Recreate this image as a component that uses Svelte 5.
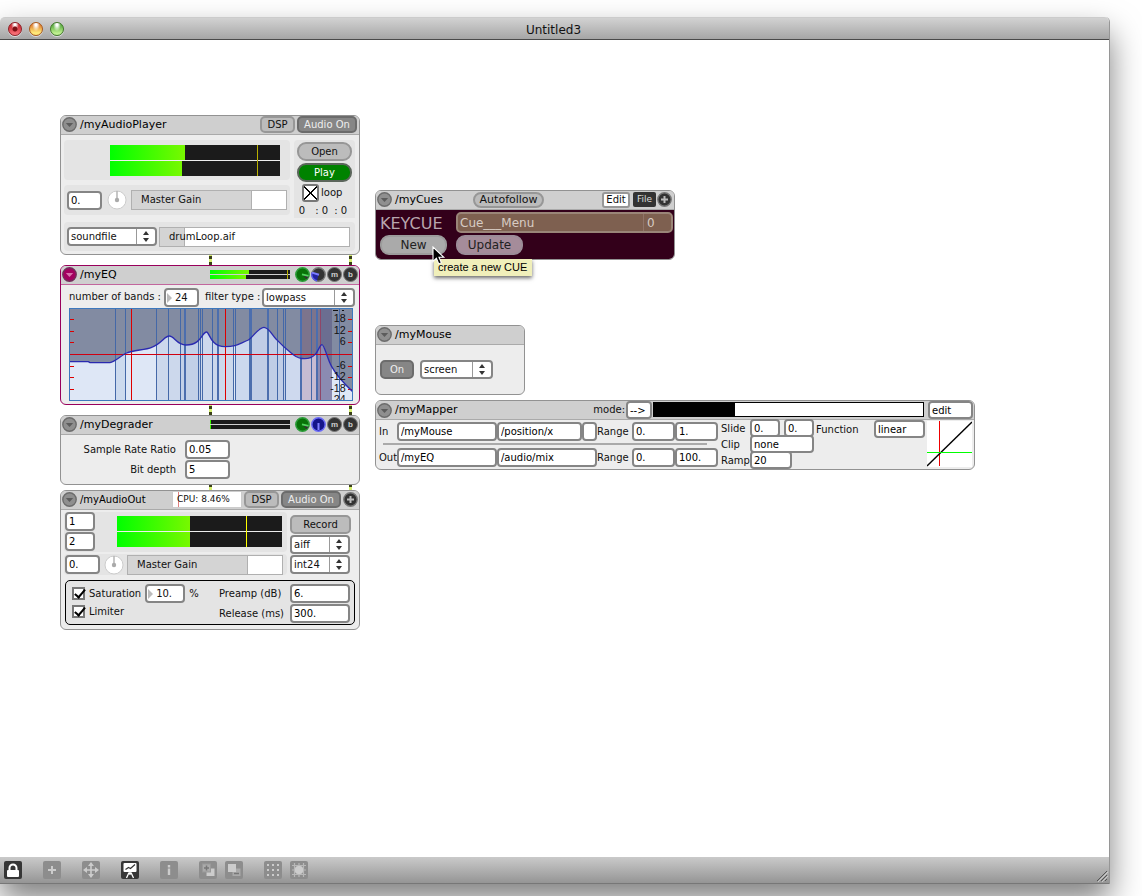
<script>
  const thinLines = [180, 210, 303, 339, 375, 429, 435, 441, 471, 534, 540, 666, 684, 690, 768, 852];
  const thickLines = [387, 390, 486, 489, 582, 585, 588, 636, 639, 735, 738, 783, 786];
  const redLines = [228, 510];
  const ticks = [193, 229, 262, 334, 367, 402];
  const scale = [
    ['18', 200], ['12', 237], ['6', 270], ['-6', 342],
    ['-12', 376], ['-18', 411], ['24', 445]
  ];
  const curve =
    'M42,320 L100,320 L105,323 L165,323 C180,320 200,300 215,294 C235,284 270,286 290,277 C320,266 328,243 343,243 C358,243 365,270 393,270 C440,270 440,231 455,231 C463,231 466,275 510,275 C545,275 550,267 580,255 C595,246 610,217 627,217 C642,217 650,240 665,254 C685,276 700,287 715,299 C735,315 765,315 780,299 C792,286 794,269 801,269 C808,269 818,315 830,335 C845,362 865,384 894,411';

  const tools = ['lock', 'new', 'move', 'present', 'info', 'front', 'back', 'grid', 'snap'];
  const toolNames = {
    lock: 'Lock patcher', new: 'New object', move: 'Move', present: 'Presentation mode', info: 'Inspector',
    front: 'Bring to front', back: 'Send to back', grid: 'Grid', snap: 'Snap to grid'
  };
</script>

{#snippet toggle(name)}
  <button class="disc" aria-label="{name} menu">
    <svg width="15" height="15" viewBox="0 0 15 15">
      <circle cx="7.5" cy="7.5" r="6.7" />
      <path d="M3.8 6h7.4L7.5 10z" />
    </svg>
  </button>
{/snippet}

{#snippet plus()}
  <button class="round" aria-label="More">
    <svg width="15" height="15" viewBox="0 0 15 15">
      <circle cx="7.5" cy="7.5" r="6.7" fill="#333" stroke="#777" stroke-width="1.4" />
      <path d="M7.5 4v7M4 7.5h7" stroke="#bbb" stroke-width="2" />
    </svg>
  </button>
{/snippet}

{#snippet meter(a, b, peak, cls)}
  <div class="meter {cls}">
    {#each [a, b] as level}
      <div class="bar"><i style:width="{level}%"></i></div>
    {/each}
    {#if peak}<span class="peak" style:left="{peak}%"></span>{/if}
  </div>
{/snippet}

{#snippet pick(value, name, cls)}
  <span class="pick {cls}">
    <select aria-label={name}><option>{value}</option></select>
    <svg width="19" height="15" viewBox="0 0 19 15">
      <path d="M.5 0v15" stroke="#999" />
      <path d="M10 2l3 4H7zM10 13l3-4H7z" fill="#333" />
    </svg>
  </span>
{/snippet}

{#snippet dial()}
  <svg class="dial" width="20" height="20" viewBox="0 0 20 20">
    <circle cx="10" cy="10" r="9" fill="#fff" stroke="#ccc" />
    <path d="M10 1v9" stroke="#b0b0b0" stroke-width="1.4" />
    <circle cx="10" cy="10" r="2.2" fill="#aaa" />
  </svg>
{/snippet}

{#snippet knobs(blue)}
  <div class="knobs">
    <svg width="15" height="15" viewBox="0 0 15 15">
      <circle cx="7.5" cy="7.5" r="6.7" fill="#087208" stroke="#2d9d3a" stroke-width="1.5" />
      <path d="M7.5 7.5l6.4 1.8-2.4 3.200z" fill="#333" />
      <path d="M7 7.3l6.400 1.5" stroke="#4fd65c" stroke-width="1.8" />
    </svg>
    <svg width="15" height="15" viewBox="0 0 15 15">
      {#if blue}
        <circle cx="7.5" cy="7.5" r="6.7" fill="#15158a" stroke="#6a6af8" stroke-width="1.5" />
        <path d="M7.5 6v7" stroke="#8080ff" stroke-width="2" />
      {:else}
        <circle cx="7.5" cy="7.5" r="6.7" fill="#333" stroke="#777" stroke-width="1.4" />
        <path d="M7.5 7.5L1 5.6A6.7 6.7 0 0 0 6 14z" fill="#2222a0" />
        <path d="M1 5.600A6.700 6.700 0 0 0 6 14" fill="none" stroke="#5a5af0" stroke-width="1.400" />
        <path d="M8 7.8L1 5.6" stroke="#7b7bff" stroke-width="2" />
      {/if}
    </svg>
    {#each ['m', 'b'] as letter}
      <button class="letter" aria-label={letter === 'm' ? 'Mute' : 'Bypass'}>{letter}</button>
    {/each}
  </div>
{/snippet}

<div class="desktop">
  <main class="window">
    <header class="titlebar">
      <div class="lights">
        <button class="light red" aria-label="Close"></button>
        <button class="light amber" aria-label="Minimise"></button>
        <button class="light green" aria-label="Zoom"></button>
      </div>
      <h1>Untitled3</h1>
    </header>

    <div class="canvas">
      <span class="cord left"></span>
      <span class="cord right"></span>

      <section class="module player">
        <div class="head">
          {@render toggle('myAudioPlayer')}
          <h2>/myAudioPlayer</h2>
          <div class="end">
            <button class="btn dsp">DSP</button>
            <button class="btn dark audio">Audio On</button>
          </div>
        </div>
        <div class="body">
          <div class="split">
            <div class="stack">
              <div class="panel meterpanel">{@render meter(44, 42.5, 86.5, 'big olive')}</div>
              <div class="panel gain">
                <input class="num w35" aria-label="Gain" value="0." />
                {@render dial()}
                <div class="slider"><i style:width="78%"></i><span>Master Gain</span></div>
              </div>
            </div>
            <div class="panel transport">
              <button class="btn pill">Open</button>
              <button class="btn pill play">Play</button>
              <label class="loop">
                <input type="checkbox" class="cross" checked />loop
              </label>
              <span class="time"><span>0</span><span>:</span><span>0</span><span>:</span><span>0</span></span>
            </div>
          </div>
          <div class="panel source">
            {@render pick('soundfile', 'Source', 'w90')}
            <div class="slider"><i style:width="13%"></i><span>drumLoop.aif</span></div>
          </div>
        </div>
      </section>

      <section class="module eq">
        <div class="head">
          {@render toggle('myEQ')}
          <h2>/myEQ</h2>
          <div class="end">
            {@render meter(49, 45, 96, 'small olive')}
            {@render knobs(false)}
          </div>
        </div>
        <div class="body">
          <div class="row">
            <label for="bands">number of bands :</label>
            <span class="spin w35"><input id="bands" value="24" /></span>
            <span class="filter">filter type :</span>
            {@render pick('lowpass', 'filter type', 'grow')}
          </div>
          <svg class="graph" viewBox="42 159 852 279" role="img" aria-label="Filter response">
            <clipPath id="under"><path d="{curve} V438 H42Z" /></clipPath>
            <rect x="42" y="159" width="852" height="279" fill="#828ba2" />
            <rect x="741" y="159" width="54" height="279" fill="#7d748c" />
            <rect x="795" y="159" width="36" height="279" fill="#6b6e91" />
            <g clip-path="url(#under)">
              <rect x="42" y="159" width="852" height="279" fill="#dee7f6" />
              <rect x="181" y="159" width="30" height="279" fill="#ccdaee" />
              <rect x="304" y="159" width="230" height="279" fill="#ccd8ec" />
              <rect x="375" y="159" width="60" height="279" fill="#c2d0e8" />
              <rect x="540" y="159" width="45" height="279" fill="#ccd8ee" />
              <rect x="588" y="159" width="150" height="279" fill="#c0cde6" />
              <rect x="690" y="159" width="48" height="279" fill="#ced9ee" />
              <rect x="741" y="159" width="44" height="279" fill="#c6bcd2" />
              <rect x="785" y="159" width="46" height="279" fill="#8b8bb2" />
            </g>
            <g shape-rendering="crispEdges">
              {#each thinLines as x}<rect {x} y="159" width="3" height="279" fill="#4468a8" />{/each}
              {#each thickLines as x}<rect {x} y="159" width="3" height="279" fill="#4c6eae" />{/each}
              {#each redLines as x}<rect {x} y="159" width="3" height="279" fill="#d00" />{/each}
              <rect x="795" y="159" width="3" height="279" fill="#8f4668" />
              <rect x="42" y="297" width="852" height="3" fill="#d00010" />
              {#each ticks as y}
                <rect x="45" y={y - 1} width="12" height="3" fill="#d00" />
                <rect x="879" y={y - 1} width="12" height="3" fill="#d00" />
              {/each}
              <path d="M835 165h15M862 165h6" stroke="#111" stroke-width="3" />
            </g>
            <path d={curve} fill="none" stroke="#2a2ab0" stroke-width="4" />
            {#each scale as [t, y]}<text x="872" {y}>{t}</text>{/each}
            <rect x="43.5" y="160.5" width="849" height="276" fill="none" stroke="#3d78bd" stroke-width="3" />
          </svg>
        </div>
      </section>

      <section class="module degrader">
        <div class="head">
          {@render toggle('myDegrader')}
          <h2>/myDegrader</h2>
          <div class="end">
            {@render meter(1, 1, 0, 'small')}
            {@render knobs(true)}
          </div>
        </div>
        <div class="body">
          <label for="ratio">Sample Rate Ratio</label><input id="ratio" class="num" value="0.05" />
          <label for="depth">Bit depth</label><input id="depth" class="num" value="5" />
        </div>
      </section>

      <section class="module out">
        <div class="head">
          {@render toggle('myAudioOut')}
          <h2>/myAudioOut</h2>
          <div class="end">
            <div class="cpu">CPU: 8.46%</div>
            <button class="btn dsp">DSP</button>
            <button class="btn dark audio">Audio On</button>
            {@render plus()}
          </div>
        </div>
        <div class="body">
          <div class="split">
            <div class="stack">
              <div class="panel outmeter">
                <div class="chans">
                  <input class="num" aria-label="Left channel" value="1" />
                  <input class="num" aria-label="Right channel" value="2" />
                </div>
                {@render meter(44.5, 44.5, 78, 'big')}
              </div>
              <div class="panel gain">
                <input class="num w35" aria-label="Output gain" value="0." />
                {@render dial()}
                <div class="slider"><i style:width="78%"></i><span>Master Gain</span></div>
              </div>
            </div>
            <div class="rec">
              <button class="btn">Record</button>
              {@render pick('aiff', 'File format', 'w60')}
              {@render pick('int24', 'Sample format', 'w60')}
            </div>
          </div>
          <div class="limits">
            <div class="checks">
              <div class="line">
                <label><input type="checkbox" class="tick" checked />Saturation</label>
                <span class="spin w40"><input aria-label="Saturation amount" value="10." /></span>
                <span>%</span>
              </div>
              <label><input type="checkbox" class="tick" checked />Limiter</label>
            </div>
            <div class="params">
              <label for="preamp">Preamp (dB)</label><input id="preamp" class="num" value="6." />
              <label for="release">Release (ms)</label><input id="release" class="num" value="300." />
            </div>
          </div>
        </div>
      </section>

      <section class="module cues">
        <div class="head">
          {@render toggle('myCues')}
          <h2>/myCues</h2>
          <button class="btn auto">Autofollow</button>
          <div class="end">
            <button class="btn edit">Edit</button>
            <button class="btn file">File</button>
            {@render plus()}
          </div>
        </div>
        <div class="body">
          <span class="key">KEYCUE</span>
          <div class="cuemenu"><span>Cue___Menu</span><b>0</b></div>
          <button class="btn new">New</button>
          <button class="btn update">Update</button>
        </div>
      </section>
      <div class="tooltip" role="tooltip">create a new CUE</div>
      <svg class="cursor" width="14" height="20" viewBox="0 0 14 20">
        <path d="M1 1v14.5l3.4-3.2 2.4 5.6 2.6-1.1L7 11.3h4.8z" fill="#000" stroke="#fff" stroke-width="1.1" />
      </svg>

      <section class="module mouse">
        <div class="head">
          {@render toggle('myMouse')}
          <h2>/myMouse</h2>
        </div>
        <div class="body">
          <button class="btn dark">On</button>
          {@render pick('screen', 'Mouse mode', 'w73')}
        </div>
      </section>

      <section class="module mapper">
        <div class="head">
          {@render toggle('myMapper')}
          <h2>/myMapper</h2>
          <div class="end">
            <label for="mode">mode:</label>
            <input id="mode" class="num mode" value="-->" />
            <div class="progress"><i style:width="30%"></i></div>
            <input class="num fnedit" aria-label="Edit function" value="edit" />
          </div>
        </div>
        <div class="body">
          <div class="routes">
            <div class="route">
              <label for="in">In</label>
              <input id="in" class="num w100" value="/myMouse" />
              <input class="num w85" aria-label="Input parameter" value="/position/x" />
              <input class="num w15" aria-label="Input index" value="" />
              <span>Range</span>
              <input class="num w43" aria-label="Input low" value="0." />
              <input class="num w43" aria-label="Input high" value="1." />
            </div>
            <hr />
            <div class="route">
              <label for="outp">Out</label>
              <input id="outp" class="num w100" value="/myEQ" />
              <input class="num w100" aria-label="Output parameter" value="/audio/mix" />
              <span>Range</span>
              <input class="num w43" aria-label="Output low" value="0." />
              <input class="num w43" aria-label="Output high" value="100." />
            </div>
          </div>
          <div class="shape">
            <div>
              <label for="slide">Slide</label>
              <input id="slide" class="num w30" value="0." /><input class="num w30 second" aria-label="Slide down" value="0." />
            </div>
            <div><label for="clip">Clip</label><input id="clip" class="num w64" value="none" /></div>
            <div><label for="ramp">Ramp</label><input id="ramp" class="num w42" value="20" /></div>
          </div>
          <label class="fnlabel" for="fn">Function</label>
          <input id="fn" class="num fn" value="linear" />
          <svg class="plot" width="45" height="46" viewBox="0 0 45 46">
            <rect width="45" height="46" fill="#fff" />
            <path d="M12.5 0v45" stroke="#e00" />
            <path d="M0 45L45 1" stroke="#000" stroke-width="1.4" />
            <path d="M0 31.5h45" stroke="#0f0" />
          </svg>
        </div>
      </section>
    </div>

    <footer class="toolbar">
      {#each tools as t}
        <button class="tool {t}" class:on={t === 'lock' || t === 'present'} aria-label={toolNames[t]}>
          <svg width="18" height="18" viewBox="0 0 18 18">
            {#if t === 'lock'}
              <rect x="3" y="9" width="12" height="7" rx="1" fill="#fff" />
              <path d="M5.5 9V7a3.5 3.5 0 0 1 7 0v2" fill="none" stroke="#fff" stroke-width="2" />
            {:else if t === 'new'}
              <path d="M9 5v8M5 9h8" stroke="#ccc" stroke-width="2" />
            {:else if t === 'move'}
              <path d="M9 3v12M3 9h12" stroke="#ccc" stroke-width="1.6" />
              <path d="M9 1l3 4H6zM9 17l3-4H6zM1 9l4-3v6zM17 9l-4-3v6z" fill="#ccc" />
            {:else if t === 'present'}
              <rect x="2.5" y="2" width="13" height="9" rx="1" fill="#fff" />
              <path d="M4.5 8.5l3-2 2 1L14 3.5" fill="none" stroke="#333" stroke-width="1.2" />
              <path d="M9 11v3M8 11.5L5.5 17M10 11.5l2.5 5.5" fill="none" stroke="#fff" stroke-width="1.3" />
            {:else if t === 'info'}
              <path d="M9 4v2.4M9 7.5V14" stroke="#ccc" stroke-width="2.4" />
            {:else if t === 'front'}
              <rect x="7.5" y="7.5" width="8" height="7.5" fill="#ccc" />
              <rect x="3.5" y="3" width="8" height="8" fill="#aaa" stroke="#999" />
              <path d="M7.500 4.500v5M5 7h5" stroke="#777" stroke-width="1.5" />
            {:else if t === 'back'}
              <rect x="7.5" y="7.5" width="8" height="7.5" fill="#aaa" />
              <rect x="3" y="3" width="8" height="8" fill="#ccc" />
              <path d="M9 12.5h5" stroke="#777" stroke-width="1.5" />
            {:else if t === 'grid'}
              {#each [4, 9, 14] as x}
                {#each [4, 9, 14] as y}<rect x={x - 1} y={y - 1} width="2" height="2" fill="#ccc" />{/each}
              {/each}
            {:else}
              <path d="M4.5 2v14M9 2v14M13.5 2v14M2 4.5h14M2 9h14M2 13.5h14" stroke="#b8b8b8" stroke-width="1.2" />
              <rect x="5" y="5" width="8" height="8" rx="3" fill="#ccc" />
            {/if}
          </svg>
        </button>
      {/each}
      <svg class="grip" width="12" height="12" viewBox="0 0 12 12">
        <path d="M1 11L11 1M5 11l6-6M9 11l2-2" stroke="#555" />
        <path d="M2 12L12 2M6 12l6-6" stroke="#ddd" stroke-width=".7" />
      </svg>
    </footer>
  </main>
</div>

<style>
  :global(body) { margin: 0; background: #fff; overflow: hidden; }
  .desktop, .desktop :global(*) { box-sizing: border-box; }
  .desktop {
    height: 100vh;
    padding: 17px 32px 12px 0;
    display: flex;
    font: 10px/14px "DejaVu Sans", Verdana, sans-serif;
    color: #111;
  }
  button, input, select { font: inherit; color: inherit; margin: 0; }
  button { padding: 0; }
  svg { display: block; flex: none; }
  h1, h2 { margin: 0; font-weight: normal; }
  .window {
    flex: 1;
    display: flex;
    flex-direction: column;
    border-right: 1px solid #969696;
    border-radius: 5px 5px 0 0;
    background: #fff;
    box-shadow: 0 16px 32px rgba(0, 0, 0, .5);
  }
  .titlebar {
    flex: none;
    height: 23px;
    position: relative;
    display: flex;
    align-items: center;
    border-top: 1px solid #ccc;
    border-bottom: 1px solid #4a4a4a;
    border-radius: 5px 5px 0 0;
    background: linear-gradient(#d2d2d2, #a6a6a6);
  }
  .titlebar h1 { flex: 1; text-align: center; font-size: 12px; line-height: 16px; padding: 2px 74px 0 0; }
  .lights { display: flex; gap: 7px; padding-left: 8px; width: 72px; }
  .light { width: 14px; height: 14px; border-radius: 50%; border: 1px solid; box-shadow: 0 1px 0 #ddd; }
  .red { border-color: #8d2026; background: radial-gradient(circle at 50% 50%, #7a1015 0 2px, transparent 3px), radial-gradient(ellipse at 50% 5%, #fff 0 1px, transparent 4px), linear-gradient(#c01520, #ff7a80); }
  .amber { border-color: #a8581c; background: radial-gradient(ellipse at 50% 10%, #fff 0 1px, transparent 4px), linear-gradient(#d8641c, #ffe878 80%); }
  .green { border-color: #41782a; background: radial-gradient(ellipse at 50% 10%, #fff 0 1px, transparent 4px), linear-gradient(#3f9a2c, #c0f090 85%); }

  .canvas { flex: 1; position: relative; min-height: 0; background: #fff; }
  .cord {
    position: absolute;
    top: 210px;
    width: 3px;
    height: 250px;
    background: repeating-linear-gradient(#3a4018 0 3px, #d6f070 3px 6px);
  }
  .cord.left { left: 209px; }
  .cord.right { left: 349px; }

  .module {
    position: absolute;
    display: flex;
    flex-direction: column;
    width: 300px;
    border: 1px solid #929292;
    border-radius: 6px;
    background: #ededed;
    overflow: hidden;
  }
  .player { left: 60px; top: 75px; height: 140px; }
  .eq { left: 60px; top: 225px; height: 140px; border-color: #99005c; }
  .degrader { left: 60px; top: 375px; height: 70px; }
  .out { left: 60px; top: 450px; height: 140px; }
  .cues { left: 375px; top: 150px; height: 70px; }
  .mouse { left: 375px; top: 285px; width: 150px; height: 70px; }
  .mapper { left: 375px; top: 360px; width: 600px; height: 70px; }

  .head {
    flex: none;
    height: 19px;
    display: flex;
    align-items: center;
    padding: 0 2px 1px 1px;
    background: #cfcfcf;
    border-bottom: 1px solid #aaa;
  }
  .eq .head { border-bottom-color: #c2669d; }
  .head h2 { font-size: 11px; padding-left: 3px; color: #000; }
  .out h2 { font-size: 10px; }
  .end { margin-left: auto; display: flex; align-items: center; gap: 2px; }
  .disc, .round { border: 0; background: none; width: 15px; height: 15px; }
  .disc circle { fill: #8f8f8f; stroke: #6c6c6c; stroke-width: 1.4; }
  .disc path { fill: #5c5c5c; }
  .eq .disc circle { fill: #a30060; stroke: #70305a; }
  .eq .disc path { fill: #d873ae; }

  .btn { border: 2px solid #979797; border-radius: 5px; background: #bcbcbc; height: 17px; line-height: 13px; text-align: center; white-space: nowrap; }
  .btn.dark { background: #868686; border-color: #6c6c6c; color: #eee; }
  .dsp { width: 35px; }
  .audio { width: 60px; }

  .panel { background: #e4e4e4; border-radius: 4px; }
  .num, .spin, .pick { border: 2px solid #858585; border-radius: 4px; background: #fff; height: 19px; }
  .num { padding: 0 2px; min-width: 0; line-height: 15px; color: #000; }
  .w15 { width: 15px; } .w30 { width: 30px; } .w35 { width: 35px; } .w40 { width: 40px; }
  .w42 { width: 42px; } .w43 { width: 43px; } .w60 { width: 60px; } .w64 { width: 64px; }
  .w73 { width: 73px; } .w85 { width: 85px; } .w90 { width: 90px; } .w100 { width: 100px; }
  .spin { display: flex; align-items: center; }
  .spin::before { content: ""; border: 5px solid transparent; border-left-color: #bbb; border-right: 0; margin-left: 1px; }
  .spin input { flex: 1; width: 0; min-width: 0; border: 0; padding: 0 0 0 3px; height: 15px; background: none; }
  .pick { display: inline-flex; }
  .pick.grow { flex: 1; }
  .pick select { flex: 1; min-width: 0; appearance: none; border: 0; background: none; padding: 0 0 0 2px; height: 15px; line-height: 15px; }
  .pick svg { margin-left: -19px; pointer-events: none; }
  .slider { position: relative; flex: 1; height: 20px; border: 1px solid #b0b0b0; background: #fff; display: flex; align-items: center; }
  .slider i { height: 18px; background: #d4d4d4; border-right: 1px solid #b0b0b0; }
  .slider span { position: absolute; left: 9px; }

  .meter { position: relative; display: flex; flex-direction: column; gap: 1px; }
  .bar { flex: 1; background: #1b1b1b; display: flex; }
  .bar i { background: linear-gradient(90deg, #0f0, #78f800); }
  .peak { position: absolute; top: 0; bottom: 0; width: 1px; background: #ff0; }
  .olive .peak { background: #b8b000; }
  .big { height: 31px; background: #eee; }
  .small { width: 80px; height: 9px; margin-right: 3px; }
  .knobs { display: flex; gap: 1px; }
  .eq .head, .degrader .head { padding-right: 1px; }
  .letter { width: 15px; height: 15px; border-radius: 50%; border: 1px solid #777; background: #333; color: #ccc; font: bold 8px/12px "Liberation Sans", sans-serif; }

  .split { display: flex; gap: 4px; }
  .stack { flex: 1; display: flex; flex-direction: column; gap: 5px; }
  .player .body { padding: 5px 4px 5px 3px; display: flex; flex-direction: column; }
  .meterpanel { height: 40px; padding: 5px 10px 0 46px; }
  .gain { display: flex; align-items: center; padding: 0 3px; height: 30px; }
  .dial { margin: 0 4px 0 5px; }
  .transport { width: 61px; padding: 2px 3px 0; display: flex; flex-direction: column; gap: 2px; border-radius: 4px 4px 0 0; }
  .pill { height: 19px; width: 55px; border-radius: 9px; line-height: 15px; }
  .play { background: #008200; border-color: #5c665c; color: #fff; }
  .loop { display: flex; align-items: center; gap: 2px; padding-left: 5px; }
  .time { display: flex; padding-left: 1px; white-space: pre; }
  .time span { width: 8px; text-align: center; }
  .time span:first-child { margin-right: 7px; }
  .time span:nth-child(3) { margin-right: 3px; }
  .source { display: flex; align-items: center; padding: 0 5px 0 3px; gap: 2px; height: 29px; margin-top: 4px; }

  .cross, .tick { appearance: none; border: 2px solid #777; background: #fff; }
  .cross {
    width: 17px; height: 18px; border-radius: 3px;
    background: linear-gradient(45deg, transparent 48%, #000 48% 52%, transparent 52%), linear-gradient(-45deg, transparent 48%, #000 48% 52%, transparent 52%), #fff;
  }
  .tick { position: relative; width: 13px; height: 13px; }
  .tick::after { content: ""; position: absolute; left: 3px; top: -2px; width: 4px; height: 9px; border: solid #000; border-width: 0 2px 2px 0; transform: rotate(40deg); }

  .eq .body { padding: 3px 5px 3px 8px; }
  .eq .row { display: flex; align-items: flex-start; height: 20px; line-height: 18px; }
  .eq label { flex: none; width: 95px; white-space: nowrap; }
  .filter { flex: none; width: 63px; padding-left: 6px; white-space: nowrap; }
  .eq .grow { margin-right: -1px; }
  .graph { width: 284px; height: 93px; }
  .graph text { font: 32px "Liberation Sans", sans-serif; text-anchor: end; fill: #111; }

  .degrader .body { display: grid; grid-template-columns: 115px 45px; grid-auto-rows: 20px; column-gap: 9px; padding-top: 5px; align-items: start; }
  .degrader label { text-align: right; line-height: 19px; }

  .cpu { width: 70px; height: 17px; padding: 0 4px; border: 1px solid #ccc; line-height: 15px; font-size: 9px; background: linear-gradient(90deg, transparent 5px, #e08080 5px 6px, transparent 6px), #fff; }
  .out .head { padding-right: 1px; }
  .out .body { padding: 2px 3px 3px; }
  .outmeter { display: flex; height: 40px; padding: 0 5px 0 1px; justify-content: space-between; }
  .outmeter .big { width: 165px; margin-top: 4px; }
  .chans { display: flex; flex-direction: column; width: 30px; gap: 1px; }
  .out .stack { gap: 2px; }
  .out .gain { height: 21px; padding: 0 4px 0 1px; }
  .out .dial { margin: 0 3px 0 4px; }
  .out .split { gap: 3px; }
  .rec { display: flex; flex-direction: column; gap: 1px; width: 66px; padding-top: 3px; }
  .rec .btn { width: 61px; height: 19px; line-height: 15px; }
  .limits { margin: 5px 1px 0; height: 45px; border: 1px solid #000; border-radius: 5px; display: flex; justify-content: space-between; background: #e4e4e4; padding: 3px 4px 0 6px; }
  .checks { display: flex; flex-direction: column; }
  .checks label { display: flex; gap: 4px; align-items: center; }
  .line { display: flex; align-items: center; gap: 4px; height: 19px; }
  .checks > label { height: 17px; }
  .params { display: grid; grid-template-columns: auto 60px; grid-auto-rows: 19px; gap: 1px 6px; align-items: center; }

  .auto { width: 71px; height: 16px; border-radius: 8px; font-size: 11px; line-height: 12px; margin-left: 30px; }
  .edit { background: #fff; width: 28px; height: 16px; line-height: 12px; border-radius: 3px; }
  .file { background: #333; border: 0; color: #ddd; width: 23px; height: 15px; font-size: 9px; border-radius: 2px; margin: 0 -1px 0 1px; }
  .cues .body { flex: 1; background: #33001a; color: #b9a6ae; display: grid; grid-template-columns: 67px 1fr; grid-template-rows: 21px 20px; gap: 2px 9px; padding: 2px 1px 3px 4px; align-items: center; }
  .key { font-size: 16px; line-height: 21px; padding-top: 1px; }
  .cuemenu { display: flex; justify-content: space-between; height: 21px; border: 2px solid #9a8578; border-radius: 5px; background: #7e6050; font-size: 12px; line-height: 18px; color: #d8ccc4; padding-left: 2px; }
  .cuemenu b { font-weight: normal; width: 28px; padding-left: 3px; border-left: 1px solid #907468; }
  .new, .update { height: 20px; width: 67px; border-radius: 9px; font-size: 12px; line-height: 16px; background: #aaa; border-color: #9c9c9c; color: #222; }
  .update { background: #a58c9a; border-color: #9c8c98; }
  .tooltip { position: absolute; left: 434px; top: 219px; height: 17px; padding: 0 5px 0 4px; font: 11px/17px "Liberation Sans", sans-serif; color: #000; background: #f0efba; box-shadow: 0 2px 4px rgba(0, 0, 0, .6); white-space: nowrap; }
  .cursor { position: absolute; left: 432px; top: 206px; }

  .mouse .body { display: flex; gap: 6px; padding: 15px 4px; }
  .mouse .btn { width: 34px; height: 19px; line-height: 15px; }

  .mapper .head { padding: 0 1px 0 1px; }
  .mapper .end { gap: 1px; }
  .mode { width: 26px; height: 18px; }
  .progress { width: 271px; height: 15px; border: 1px solid #000; background: #fff; display: flex; margin-bottom: 2px; }
  .progress i { background: #000; }
  .fnedit { width: 45px; height: 18px; margin-left: 3px; }
  .mapper .body { display: flex; align-items: flex-start; padding-left: 3px; }
  .routes { width: 339px; padding-top: 2px; }
  .route { display: flex; align-items: center; white-space: nowrap; }
  .route label { width: 18px; flex: none; }
  .route span { width: 35px; flex: none; }
  .routes hr { border: 0; height: 2px; background: #aaa; margin: 2px 11px 3px 4px; }
  .shape { width: 93px; margin-left: 3px; }
  .shape div { display: flex; align-items: center; height: 16px; }
  .shape label { width: 29px; flex: none; padding-top: 2px; }
  .shape .num { height: 18px; line-height: 14px; }
  .shape .second { margin-left: 4px; }
  .fnlabel { margin: 3px 0 0 2px; width: 58px; }
  .fn { width: 51px; height: 18px; margin-right: 2px; }
  .plot { margin-top: 1px; }

  .toolbar { flex: none; height: 27px; display: flex; align-items: center; gap: 21px; padding: 0 0 0 4px; background: linear-gradient(#cacaca, #959595); border-bottom: 1px solid #777; position: relative; }
  .tool { width: 18px; height: 18px; border: 0; border-radius: 2px; background: #8d8d8d; flex: none; }
  .tool.on { background: #363636; }
  .tool.back, .tool.snap { margin-left: -13px; }
  .grip { margin: 12px 1px 0 auto; }
</style>
